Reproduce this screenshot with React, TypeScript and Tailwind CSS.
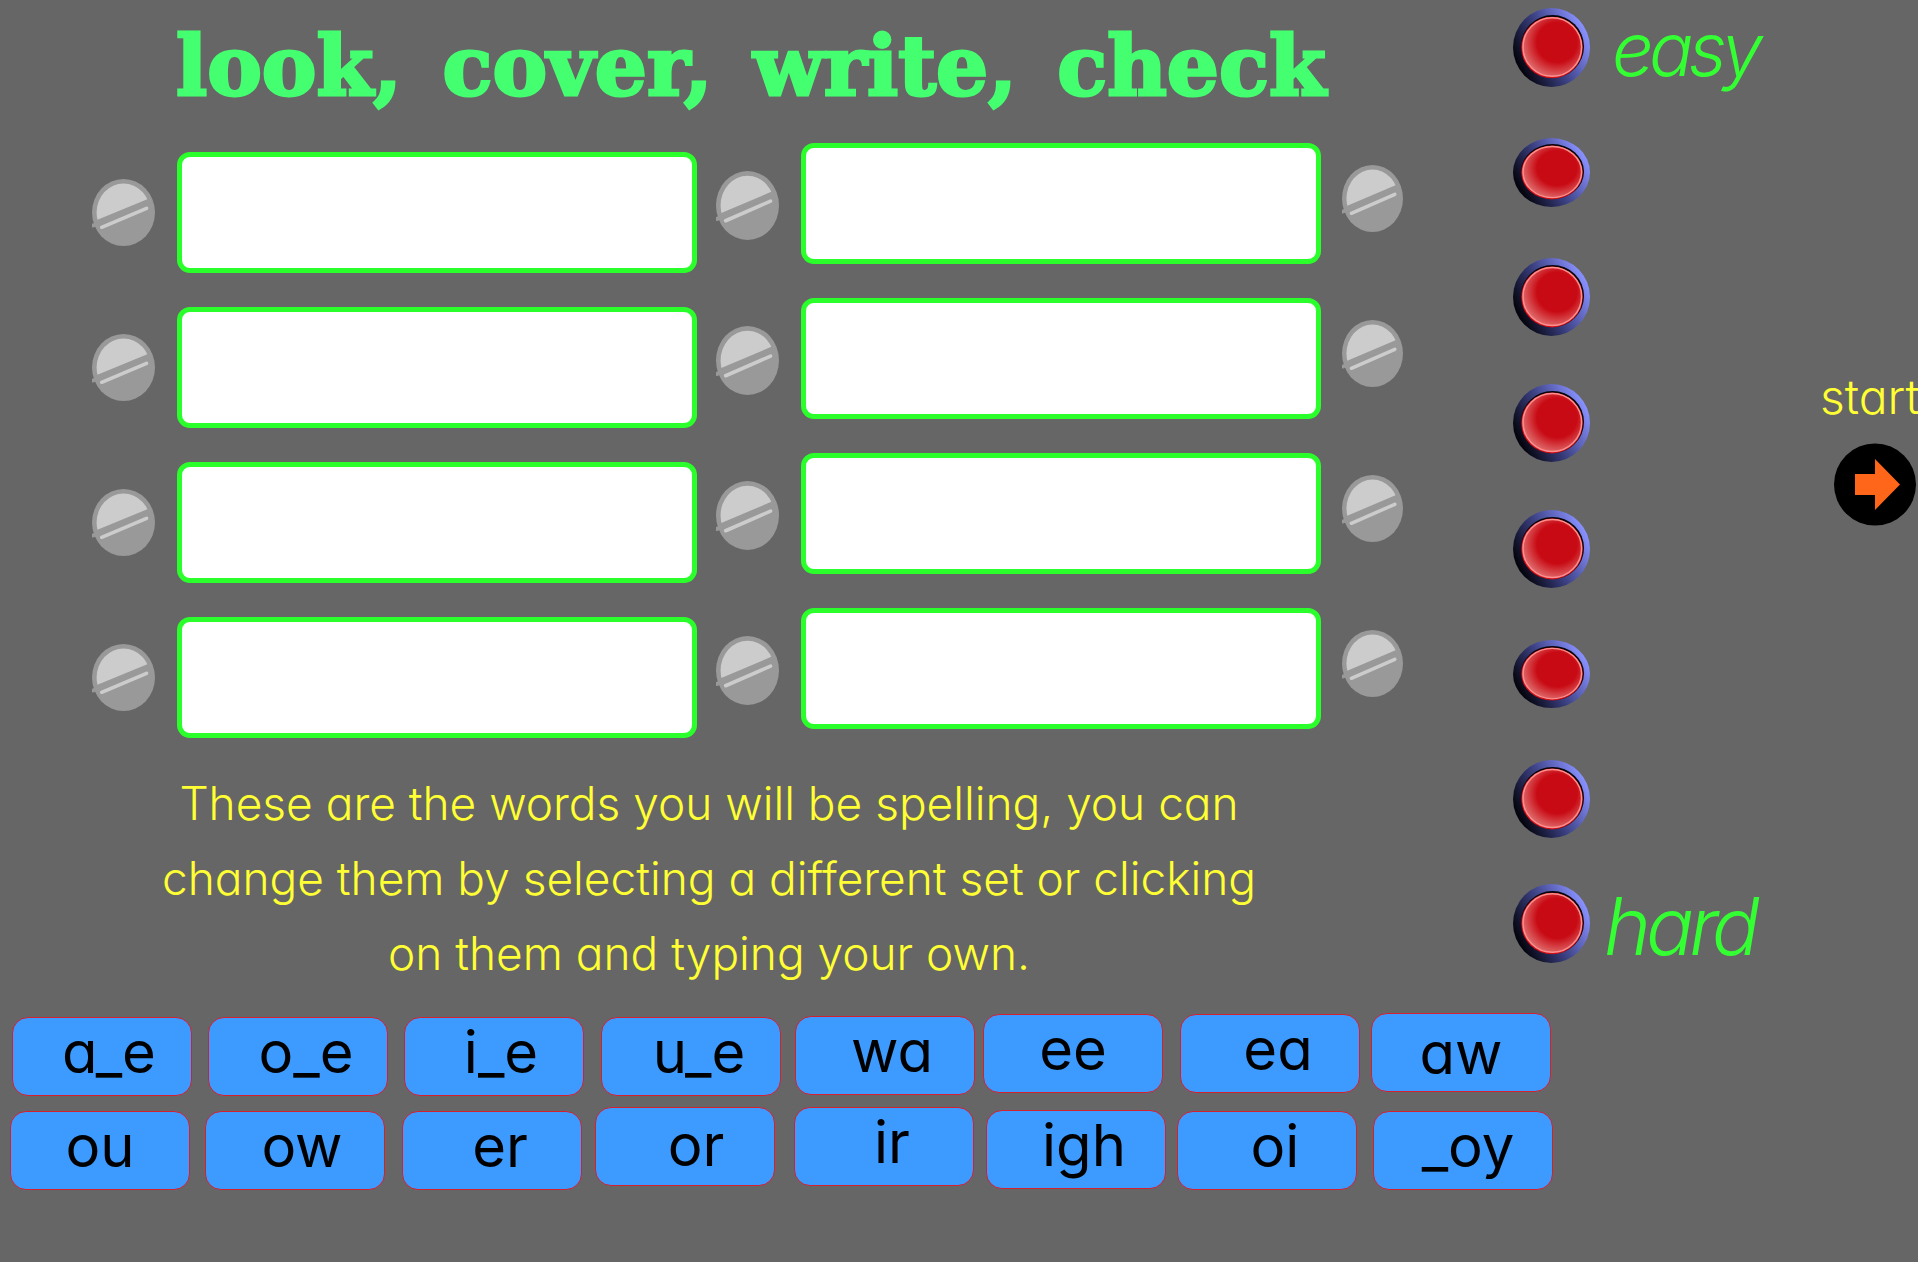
import React from "react";

const sans = "[font-family:Inter,sans-serif] [font-feature-settings:'cv11']";

function Screw({ className, id }: { className: string; id: string }) {
  return (
    <svg viewBox="0 0 62 67" preserveAspectRatio="none" className={`shrink-0 ${className}`}>
      <ellipse cx="31" cy="33.5" rx="31" ry="33.5" fill="#999999" />
      <clipPath id={id}>
        <polygon points="0,43 55,20 62,0 0,0" />
      </clipPath>
      <ellipse cx="31" cy="33.5" rx="26.5" ry="29" fill="#cccccc" clipPath={`url(#${id})`} />
      <path d="M1 46.5 L10 43" stroke="#999999" strokeWidth="4" strokeLinecap="round" />
      <path d="M9.5 48.3 L53.7 29.3" stroke="#cccccc" strokeWidth="3.5" strokeLinecap="round" />
    </svg>
  );
}

function Box({ id, screwA }: { id: string; screwA: string }) {
  return (
    <div className="flex items-start">
      <Screw id={`${id}a`} className={screwA} />
      <input
        aria-label="word"
        className="w-[520px] h-[121px] ml-[22px] bg-white border-[5px] border-[#2bff2b] rounded-[13px] shrink-0"
      />
    </div>
  );
}

function Radio({ className, id }: { className: string; id: string }) {
  return (
    <svg viewBox="0 0 77 79" preserveAspectRatio="none" className={`shrink-0 w-[77px] ${className}`}>
      <defs>
        <linearGradient id={`${id}o`} x1="0.1" y1="0.75" x2="0.95" y2="0.3">
          <stop offset="0" stopColor="#05050f" />
          <stop offset="0.45" stopColor="#3a3f80" />
          <stop offset="1" stopColor="#8890ff" />
        </linearGradient>
        <radialGradient id={`${id}r`} cx="0.58" cy="0.42" r="0.62">
          <stop offset="0" stopColor="#c80a14" />
          <stop offset="0.55" stopColor="#c80a14" />
          <stop offset="1" stopColor="#e07070" />
        </radialGradient>
      </defs>
      <ellipse cx="38.5" cy="39.5" rx="38.5" ry="39.5" fill={`url(#${id}o)`} />
      <circle cx="39.5" cy="38.5" r="31.5" fill="#05050a" />
      <circle cx="39" cy="39.5" r="30.8" fill="#d01018" />
      <circle cx="39.3" cy="39" r="29.3" fill={`url(#${id}r)`} stroke="#ff9090" strokeWidth="1.5" />
    </svg>
  );
}

const row1 = [
  { t: "a_e", c: "ml-[12px] mt-[4px] pl-[14px] pb-[10px]" },
  { t: "o_e", c: "ml-[16px] mt-[4px] pl-[16px] pb-[10px]" },
  { t: "i_e", c: "ml-[16px] mt-[4px] pl-[14px] pb-[10px]" },
  { t: "u_e", c: "ml-[17px] mt-[4px] pl-[16px] pb-[10px]" },
  { t: "wa", c: "ml-[14px] mt-[3px] pl-[14px] pb-[10px]" },
  { t: "ee", c: "ml-[8px] mt-[1px] pb-[9px]" },
  { t: "ea", c: "ml-[17px] mt-[1px] pl-[16px] pb-[9px]" },
  { t: "aw", c: "ml-[11px] mt-0 pb-0" },
];
const row2 = [
  { t: "ou", c: "ml-[10px] mt-[4px] pb-[10px]" },
  { t: "ow", c: "ml-[15px] mt-[4px] pl-[14px] pb-[10px]" },
  { t: "er", c: "ml-[17px] mt-[4px] pl-[16px] pb-[10px]" },
  { t: "or", c: "ml-[13px] mt-0 pl-[22px] pb-[3px]" },
  { t: "ir", c: "ml-[19px] mt-0 pl-[16px] pb-[10px]" },
  { t: "igh", c: "ml-[12px] mt-[3px] pl-[16px] pb-[10px]" },
  { t: "oi", c: "ml-[11px] mt-[4px] pl-[16px] pb-[10px]" },
  { t: "_oy", c: "ml-[16px] mt-[4px] pl-[10px] pb-[10px]" },
];

const radios = [
  { c: "h-[79px]", m: "mt-[8px]" },
  { c: "h-[69px]", m: "mt-[51px]" },
  { c: "h-[78px]", m: "mt-[51px]" },
  { c: "h-[78px]", m: "mt-[48px]" },
  { c: "h-[78px]", m: "mt-[48px]" },
  { c: "h-[68px]", m: "mt-[52px]" },
  { c: "h-[78px]", m: "mt-[52px]" },
  { c: "h-[79px]", m: "mt-[46px]" },
];

function Tile({ t, c }: { t: string; c: string }) {
  return (
    <button className={`w-[180px] h-[79px] shrink-0 flex items-center justify-center bg-[#3d9aff] border border-[#d4202f] rounded-[16px] text-black text-[58px] leading-none ${c}`}>
      {t}
    </button>
  );
}

export default function App() {
  return (
    <div className={`w-[1918px] h-[1262px] bg-[#666666] overflow-hidden ${sans}`}>
      <div className="flex h-[1013px]">
        <div className="w-[1513px] shrink-0">
          <h1 className="h-[143px] pl-[176px] pt-[16px] text-[#44ff70] text-[82px] leading-[100px] font-bold whitespace-nowrap [font-family:'DejaVu_Serif',serif] [-webkit-text-stroke:3px_#44ff70] [font-feature-settings:normal] [word-spacing:12px]">
            look, cover, write, check
          </h1>
          <div className="flex items-start pl-[92px]">
            <div className="flex flex-col gap-[34px] mt-[9px]">
              {[0, 1, 2, 3].map((i) => (
                <Box key={i} id={`l${i}`} screwA="w-[63px] h-[67px] mt-[27px]" />
              ))}
            </div>
            <div className="flex flex-col gap-[34px] ml-[19px]">
              {[0, 1, 2, 3].map((i) => (
                <div key={i} className="flex items-start">
                  <Box id={`r${i}`} screwA="w-[63px] h-[69px] mt-[28px]" />
                  <Screw id={`x${i}`} className="w-[61px] h-[67px] mt-[22px] ml-[21px]" />
                </div>
              ))}
            </div>
          </div>
          <p className="w-[1418px] mt-[28px] text-center text-[#ffff33] text-[46px] leading-[75px] font-light whitespace-nowrap">
            These are the words you will be spelling, you can
            <br />
            change them by selecting a different set or clicking
            <br />
            on them and typing your own.
          </p>
        </div>
        <div className="w-[309px] shrink-0">
          {radios.map((r, i) => (
            <div key={i} className={`flex items-start ${r.m}`}>
              <Radio id={`rd${i}`} className={r.c} />
              {i === 0 && (
                <span className="ml-[22px] mt-[4px] italic font-light text-[#33ff33] text-[74px] leading-[74px] tracking-[-5px]">easy</span>
              )}
              {i === 7 && (
                <span className="ml-[14px] mt-[2px] italic font-light text-[#33ff33] text-[80px] leading-[80px] tracking-[-5px]">hard</span>
              )}
            </div>
          ))}
        </div>
        <div className="w-[96px] shrink-0 pt-[372px]">
          <div className="-ml-[2px] text-[#ffff33] text-[48px] leading-[50px] font-light whitespace-nowrap">start</div>
          <svg viewBox="0 0 82 83" className="w-[82px] h-[83px] ml-[12px] mt-[21px]">
            <circle cx="41" cy="41.5" r="41" fill="#000000" />
            <polygon points="21,31 41,31 41,16 66,41.5 41,67 41,52 21,52" fill="#ff661a" />
          </svg>
        </div>
      </div>
      <div className="flex items-start h-[94px]">
        {row1.map((b) => (
          <Tile key={b.t} {...b} />
        ))}
      </div>
      <div className="flex items-start">
        {row2.map((b) => (
          <Tile key={b.t} {...b} />
        ))}
      </div>
    </div>
  );
}
